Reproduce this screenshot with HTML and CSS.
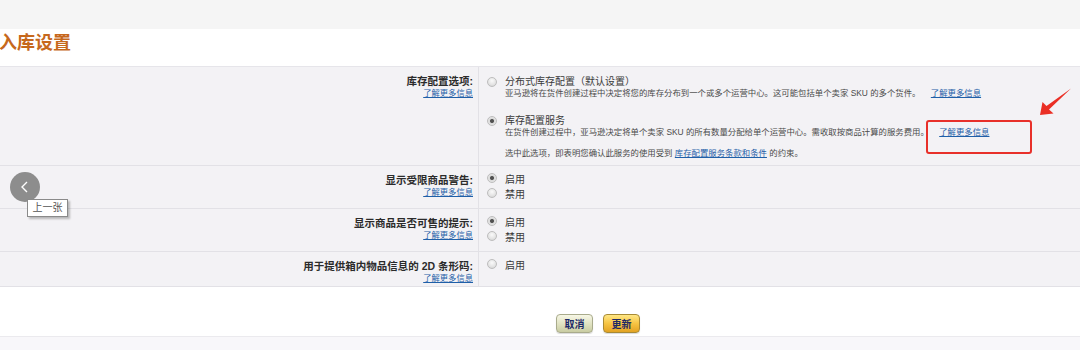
FILE: index.html
```html
<!DOCTYPE html>
<html lang="zh-CN">
<head>
    <meta charset="UTF-8">
    <meta name="viewport" content="width=device-width, initial-scale=1.0">
    <title>入库设置</title>
    <link rel="stylesheet" href="styles.css">
</head>
<body>
    <div class="top-band"></div>
    <div class="page-header">
        <h1>入库设置</h1>
    </div>

    <div class="settings">
        <div class="row">
            <div class="label">
                <b>库存配置选项:</b>
                <a href="#">了解更多信息</a>
            </div>
            <div class="field field-placement">
                <label class="option">
                    <input type="radio" name="placement">
                    <span class="option-text">
                        <span class="option-title">分布式库存配置（默认设置）</span>
                        <span class="option-desc">亚马逊将在货件创建过程中决定将您的库存分布到一个或多个运营中心。这可能包括单个卖家 SKU 的多个货件。 <a href="#">了解更多信息</a></span>
                    </span>
                </label>
                <label class="option option-second">
                    <input type="radio" name="placement" checked>
                    <span class="option-text">
                        <span class="option-title">库存配置服务</span>
                        <span class="option-desc">在货件创建过程中，亚马逊决定将单个卖家 SKU 的所有数量分配给单个运营中心。需收取按商品计算的服务费用。 <a href="#">了解更多信息</a></span>
                    </span>
                </label>
                <p class="note">选中此选项，即表明您确认此服务的使用受到 <a href="#">库存配置服务条款和条件</a> 的约束。</p>
            </div>
        </div>

        <div class="row">
            <div class="label">
                <b>显示受限商品警告:</b>
                <a href="#">了解更多信息</a>
            </div>
            <div class="field">
                <label class="choice"><input type="radio" name="restricted" checked>启用</label>
                <label class="choice"><input type="radio" name="restricted">禁用</label>
            </div>
        </div>

        <div class="row">
            <div class="label">
                <b>显示商品是否可售的提示:</b>
                <a href="#">了解更多信息</a>
            </div>
            <div class="field">
                <label class="choice"><input type="radio" name="sellable" checked>启用</label>
                <label class="choice"><input type="radio" name="sellable">禁用</label>
            </div>
        </div>

        <div class="row row-last">
            <div class="label">
                <b>用于提供箱内物品信息的 2D 条形码:</b>
                <a href="#">了解更多信息</a>
            </div>
            <div class="field">
                <label class="choice"><input type="radio" name="barcode">启用</label>
            </div>
        </div>
    </div>

    <div class="actions">
        <button class="btn btn-cancel">取消</button>
        <button class="btn btn-update">更新</button>
    </div>
    <div class="bottom-band"></div>

    <!-- overlays from the screenshot viewer -->
    <button class="prev-photo" aria-label="上一张">
        <svg width="30" height="30" viewBox="0 0 30 30"><path d="M17 10 L12 15 L17 20" fill="none" stroke="#fff" stroke-width="1.4"/></svg>
    </button>
    <span class="prev-tip">上一张</span>

    <div class="mark-box"></div>
    <svg class="mark-arrow" width="50" height="45" viewBox="0 0 50 45">
        <polygon points="10,35 12.5,22 16.5,26 41,8.5 19,29.5 23.5,33.5" fill="#ea2f25"/>
    </svg>
</body>
</html>
```

FILE: styles.css
```css
body{
    margin: 0;
    width: 1080px;
    height: 350px;
    overflow: hidden;
    position: relative;
    background-color: #f8f7fa;
    font-family: "Liberation Sans", "Noto Sans CJK SC", sans-serif;
    color: #333;
}
a{
    color: #1f5fa8;
    text-decoration: underline;
}
.top-band{
    height: 29px;
    background-color: #f5f5f5;
}
.page-header{
    background-color: #fff;
    padding: 4px 0 13px;
    border-bottom: 1px solid #e6e5ea;
}
.page-header h1{
    margin: 0 0 0 -1px;
    font-size: 18px;
    line-height: 20px;
    font-weight: bold;
    color: #c6681c;
}
.settings{
    background-color: #f3f2f5;
}
.row{
    display: grid;
    grid-template-columns: 478px 1fr;
    border-bottom: 1px solid #e2e1e6;
}
.label{
    text-align: right;
    padding: 8px 5px 2px 0;
    display: flex;
    flex-direction: column;
    align-items: flex-end;
}
.label b{
    font-size: 10.5px;
    line-height: 12px;
    color: #2b2b2b;
}
.label a{
    font-size: 8.3px;
    line-height: 12px;
}
.field{
    border-left: 1px solid #e2e1e6;
    padding: 5px 0 7px 8px;
}
.field-placement{
    padding: 9px 0 6px 8px;
}
input[type="radio"]{
    appearance: none;
    -webkit-appearance: none;
    margin: 0;
    width: 10px;
    height: 10px;
    flex: none;
    border-radius: 50%;
    border: 1px solid #bdbdbd;
    background: radial-gradient(circle at 50% 35%, #fafafa 0, #e3e3e3 60%, #cfcfcf 100%);
    box-sizing: border-box;
}
input[type="radio"]:checked{
    background: radial-gradient(circle, #4a4a4a 0, #5a5a5a 1.7px, #dadada 2.4px, #efefef 100%);
}
.option{
    display: flex;
    align-items: flex-start;
    gap: 8px;
}
.option input{
    margin-top: 1px;
}
.option-second{
    margin-top: 15.5px;
}
.option-text{
    display: flex;
    flex-direction: column;
}
.option-title{
    font-size: 10px;
    line-height: 12px;
    color: #3a3a3a;
}
.option-desc{
    font-size: 8.4px;
    line-height: 11px;
    color: #4a4a4a;
}
.option-desc a{
    margin-left: 8px;
}
.note{
    margin: 10px 0 0 18px;
    font-size: 8.4px;
    line-height: 11px;
    color: #4a4a4a;
}
.choice{
    display: flex;
    align-items: center;
    gap: 8px;
    height: 15px;
    font-size: 10px;
    color: #3a3a3a;
}
.actions{
    background-color: #fff;
    padding: 27px 0 3px 556px;
    display: flex;
    gap: 10px;
    border-bottom: 1px solid #ebeaee;
}
.btn{
    width: 37px;
    height: 19px;
    padding: 0;
    border-radius: 4px;
    font-family: "Liberation Sans", "Noto Sans CJK SC", sans-serif;
    font-size: 10px;
    font-weight: bold;
    color: #1c2866;
    box-shadow: 0 1px 1px rgba(0,0,0,0.15);
}
.btn-cancel{
    border: 1px solid #a9ab8c;
    background: linear-gradient(#f7f7e6, #dfe1c0 55%, #c9cca2);
}
.btn-update{
    border: 1px solid #a88a34;
    background: linear-gradient(#ffe785, #f6c443 50%, #e3a323);
}
.bottom-band{
    height: 13px;
    border-bottom: 1px solid #efeef2;
}
.prev-photo{
    position: absolute;
    left: 10px;
    top: 172px;
    width: 30px;
    height: 30px;
    padding: 0;
    border: none;
    border-radius: 50%;
    background-color: #8d8d8d;
}
.prev-photo svg{
    display: block;
}
.prev-tip{
    position: absolute;
    left: 27px;
    top: 199px;
    width: 39px;
    height: 16px;
    line-height: 16px;
    text-align: center;
    background-color: #fff;
    border: 1px solid #8a8a8a;
    box-shadow: 2px 2px 2px rgba(0,0,0,0.25);
    font-size: 10px;
    color: #555;
}
.mark-box{
    position: absolute;
    left: 926px;
    top: 120px;
    width: 102px;
    height: 30px;
    border: 2px solid #e8302a;
    border-radius: 3px;
}
.mark-arrow{
    position: absolute;
    left: 1030px;
    top: 80px;
}
```
